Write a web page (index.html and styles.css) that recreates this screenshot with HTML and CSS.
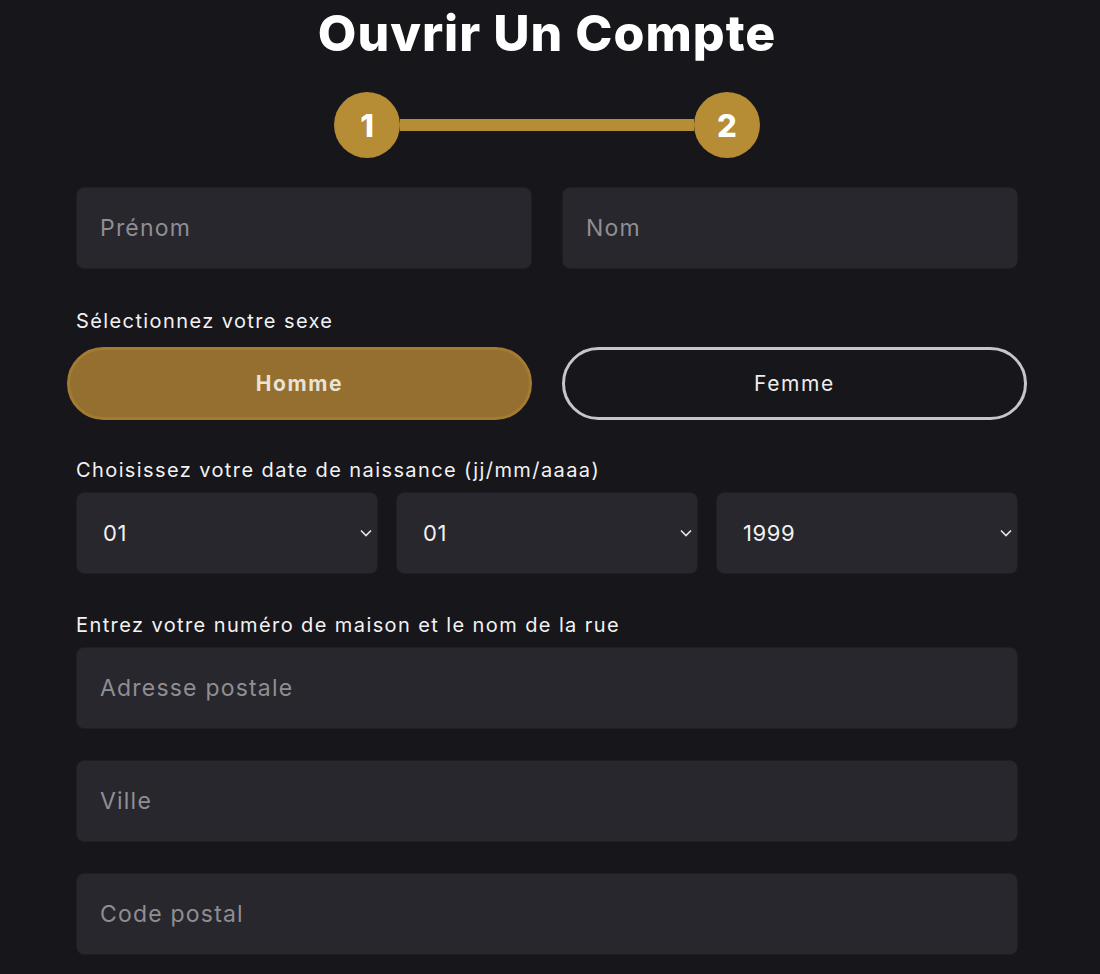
FILE: index.html
```html
<!DOCTYPE html>
<html lang="fr">
  <head>
    <meta charset="UTF-8" />
    <meta name="viewport" content="width=device-width, initial-scale=1.0" />
    <title>Ouvrir Un Compte</title>

    <link rel="stylesheet" href="styles.css">
  </head>
  <body>
    <main id="signup">
      <h1>Ouvrir Un Compte</h1>

      <div class="steps">
        <span class="steps__dot">1</span>
        <span class="steps__line"></span>
        <span class="steps__dot">2</span>
      </div>

      <form id="form">
        <div class="row row--names">
          <input type="text" class="field" name="firstName" placeholder="Prénom" />
          <input type="text" class="field" name="lastName" placeholder="Nom" />
        </div>

        <label class="label">Sélectionnez votre sexe</label>
        <div class="row row--gender">
          <button type="button" class="pill pill--active">Homme</button>
          <button type="button" class="pill">Femme</button>
        </div>

        <label class="label">Choisissez votre date de naissance (jj/mm/aaaa)</label>
        <div class="row row--date">
          <div class="select">
            <select name="day"><option>01</option></select>
            <svg viewBox="0 0 12 8"><path d="M1 1.5l5 5 5-5" /></svg>
          </div>
          <div class="select">
            <select name="month"><option>01</option></select>
            <svg viewBox="0 0 12 8"><path d="M1 1.5l5 5 5-5" /></svg>
          </div>
          <div class="select">
            <select name="year"><option>1999</option></select>
            <svg viewBox="0 0 12 8"><path d="M1 1.5l5 5 5-5" /></svg>
          </div>
        </div>

        <label class="label">Entrez votre numéro de maison et le nom de la rue</label>
        <input type="text" class="field field--wide" name="address" placeholder="Adresse postale" />
        <input type="text" class="field field--wide" name="city" placeholder="Ville" />
        <input type="text" class="field field--wide" name="zip" placeholder="Code postal" />
      </form>
    </main>
  </body>
</html>
```

FILE: styles.css
```css
* {
  margin: 0;
  padding: 0;
  box-sizing: border-box;
}

:root {
  font-family: Inter, "Open Sans", Arial, sans-serif;
}

body {
  background: #17161b;
  color: #f2f2f2;
  overflow: hidden;
}

#signup {
  width: 942px;
  margin-left: 76px;
}

h1 {
  text-align: center;
  font-size: 50px;
  font-weight: 800;
  letter-spacing: 1px;
  line-height: 1;
  padding-top: 8px;
  color: #fff;
}

.steps {
  display: flex;
  align-items: center;
  justify-content: center;
  margin-top: 34px;
}

.steps__dot {
  width: 66px;
  height: 66px;
  border-radius: 50%;
  background: #b68c35;
  display: flex;
  align-items: center;
  justify-content: center;
  font-size: 31px;
  font-weight: 800;
  color: #fff;
}

.steps__line {
  width: 294px;
  height: 12px;
  background: #b68c35;
}

#form {
  display: flex;
  flex-direction: column;
  margin-top: 29px;
}

.row {
  display: flex;
}

.row--names {
  gap: 30px;
}

.row--names > .field {
  flex: 1;
}

.field {
  height: 82px;
  min-width: 0;
  padding: 0 23px;
  background: #28272d;
  border: 1px solid #1f1e23;
  border-radius: 8px;
  color: #f2f2f2;
  font-family: inherit;
  font-size: 23px;
  letter-spacing: 1.2px;
  outline: none;
}

.field::placeholder {
  color: #8f8e93;
}

.field--wide + .field--wide {
  margin-top: 31px;
}

.label {
  font-size: 20px;
  letter-spacing: 1.4px;
  line-height: 24px;
  color: #f2f2f2;
}

.row--names + .label {
  margin-top: 40px;
}

.row--gender {
  gap: 30px;
  margin: 14px -9px 0;
}

.pill {
  flex: 1;
  height: 73px;
  border-radius: 37px;
  font-family: inherit;
  font-size: 21px;
  letter-spacing: 1.6px;
  background: transparent;
  border: 3px solid #c6c6c8;
  color: #ececec;
}

.pill--active {
  background: #946f2f;
  border: 3px solid #a47b32;
  color: #e9e2d6;
  font-weight: 700;
}

.row--gender + .label {
  margin-top: 38px;
}

.row--date {
  gap: 18px;
  margin-top: 10px;
}

.select {
  flex: 1;
  position: relative;
}

.select select {
  appearance: none;
  width: 100%;
  height: 82px;
  padding: 0 26px;
  background: #28272d;
  border: 1px solid #1f1e23;
  border-radius: 8px;
  color: #f2f2f2;
  font-family: inherit;
  font-size: 22px;
  letter-spacing: 0.6px;
  outline: none;
}

.select svg {
  position: absolute;
  right: 6px;
  top: 37px;
  width: 12px;
  height: 8px;
  fill: none;
  stroke: #e6e6e6;
  stroke-width: 1.6;
  pointer-events: none;
}

.row--date + .label {
  margin-top: 39px;
}

.label + .field--wide {
  margin-top: 10px;
}
```
